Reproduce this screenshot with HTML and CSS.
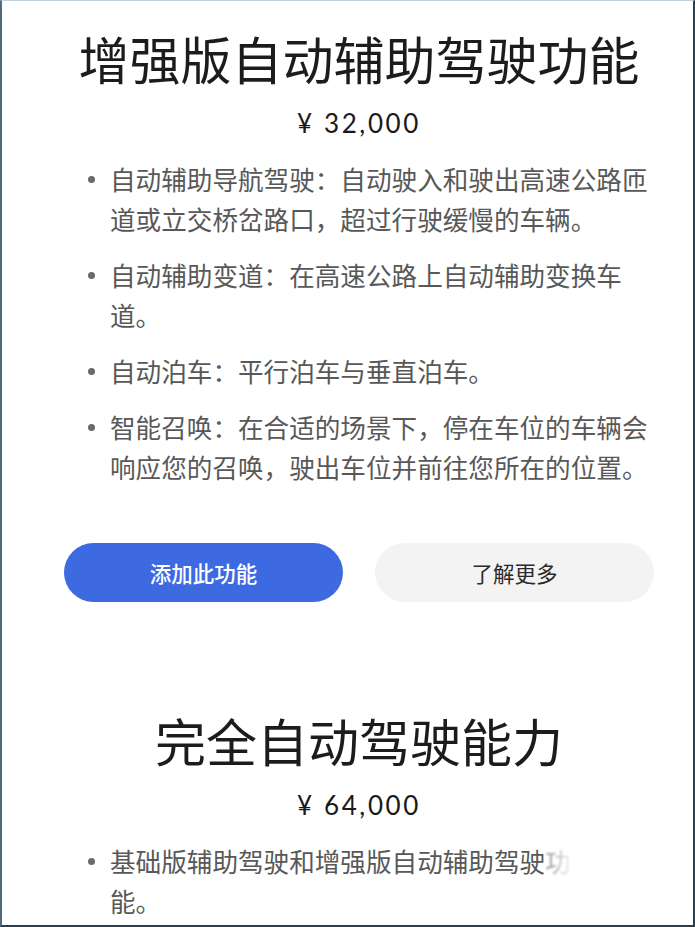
FILE: index.html
```html
<!DOCTYPE html>
<html lang="zh-CN">
<head>
<meta charset="utf-8">
<title>增强版自动辅助驾驶功能</title>
<link rel="stylesheet" href="styles.css">
</head>
<body>
<div class="frame">
  <div class="content">
    <section class="feature">
      <h1 class="title">增强版自动辅助驾驶功能</h1>
      <p class="price">¥ 32,000</p>
      <ul class="list">
        <li>自动辅助导航驾驶：自动驶入和驶出高速公路匝道或立交桥岔路口，超过行驶缓慢的车辆。</li>
        <li>自动辅助变道：在高速公路上自动辅助变换车道。</li>
        <li>自动泊车：平行泊车与垂直泊车。</li>
        <li>智能召唤：在合适的场景下，停在车位的车辆会响应您的召唤，驶出车位并前往您所在的位置。</li>
      </ul>
      <div class="actions">
        <button class="btn btn-primary">添加此功能</button>
        <button class="btn btn-secondary">了解更多</button>
      </div>
    </section>
    <section class="feature feature-second">
      <h1 class="title">完全自动驾驶能力</h1>
      <p class="price">¥ 64,000</p>
      <ul class="list">
        <li><span>基础版辅助驾驶和增强版自动辅助驾驶<span class="fade">功</span><br>能。</span></li>
      </ul>
    </section>
  </div>
</div>
</body>
</html>
```

FILE: styles.css
```css
html, body {
  margin: 0;
  padding: 0;
  background: #ffffff;
}

.frame {
  box-sizing: border-box;
  width: 695px;
  height: 927px;
  overflow: hidden;
  background: #ffffff;
  border-top: 1px solid #c3d1dc;
  border-left: 2px solid #4f6b80;
  border-right: 2px solid #2b3e4d;
  border-bottom: 2px solid #2b3e4d;
  font-family: "Noto Sans CJK SC", "Noto Sans", sans-serif;
}

.content {
  width: 590px;
  margin-left: 62px;
}

.feature {
  display: flex;
  flex-direction: column;
}

.title {
  margin: 27px 0 0 0;
  font-size: 51px;
  line-height: 60px;
  font-weight: 400;
  color: #1c1c1c;
  text-align: center;
  white-space: nowrap;
}

.price {
  margin: 20px 0 0 0;
  font-family: Lato, "Noto Sans", sans-serif;
  font-size: 26px;
  line-height: 30px;
  letter-spacing: 2.6px;
  color: #1a1a1a;
  text-align: center;
}

.list {
  list-style: none;
  margin: 21px 0 0 0;
  padding: 0;
  display: flex;
  flex-direction: column;
  gap: 16px;
}

.list li {
  display: flex;
  font-size: 25.6px;
  line-height: 40px;
  color: #585858;
}

.list li::before {
  content: "";
  flex: none;
  width: 7px;
  height: 7px;
  border-radius: 50%;
  background: #6a6a6a;
  margin: 17px 15px 0 24px;
}

.fade {
  display: inline-block;
  filter: blur(1.2px);
  opacity: 0.55;
  width: 30px;
  -webkit-mask-image: linear-gradient(to right, #000 20%, transparent 95%);
  mask-image: linear-gradient(to right, #000 20%, transparent 95%);
}

.actions {
  display: flex;
  gap: 32px;
  margin-top: 56px;
}

.btn {
  flex: 1;
  height: 59px;
  border: none;
  border-radius: 30px;
  font-family: "Noto Sans CJK SC", "Noto Sans", sans-serif;
  font-size: 21.5px;
  padding: 0;
}

.btn-primary {
  background: #3e6ae1;
  color: #ffffff;
  font-weight: 500;
}

.btn-secondary {
  background: #f3f3f3;
  color: #2a2a2a;
}

.feature-second .title {
  margin-top: 108px;
}
```
